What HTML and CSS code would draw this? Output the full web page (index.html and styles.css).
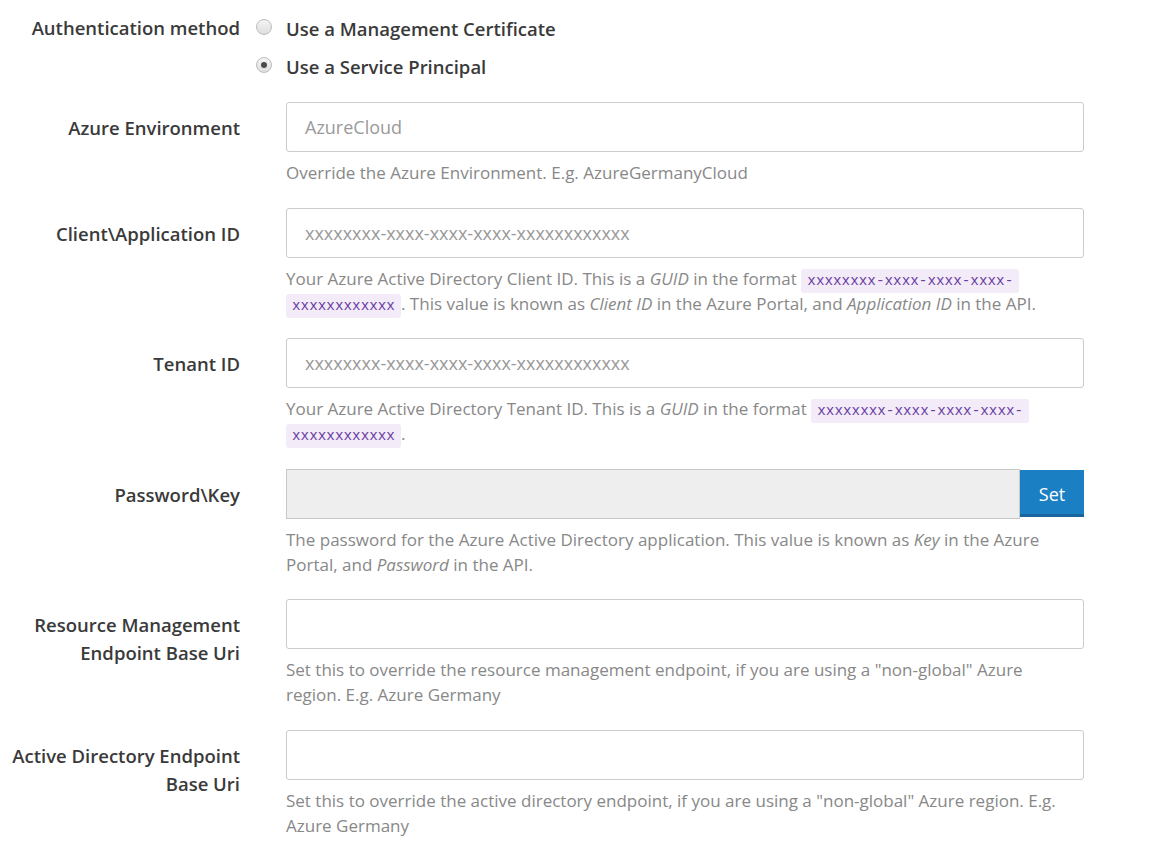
FILE: index.html
```html
<!DOCTYPE html>
<html lang="en">
<head>
<meta charset="utf-8">
<title>Azure account</title>
<link rel="stylesheet" href="styles.css">
</head>
<body>
<form class="form">
  <div class="row row-auth">
    <div class="label">Authentication method</div>
    <div class="control radios">
      <label class="radio"><span class="dot"></span><span class="radio-text">Use a Management Certificate</span></label>
      <label class="radio"><span class="dot checked"></span><span class="radio-text">Use a Service Principal</span></label>
    </div>
  </div>

  <div class="row">
    <div class="label">Azure Environment</div>
    <div class="control">
      <div class="input"><span class="placeholder">AzureCloud</span></div>
      <p class="help">Override the Azure Environment. E.g. AzureGermanyCloud</p>
    </div>
  </div>

  <div class="row">
    <div class="label">Client\Application ID</div>
    <div class="control">
      <div class="input"><span class="placeholder">xxxxxxxx-xxxx-xxxx-xxxx-xxxxxxxxxxxx</span></div>
      <p class="help">Your Azure Active Directory Client ID. This is a <em>GUID</em> in the format <code>xxxxxxxx-xxxx-xxxx-xxxx-<br>xxxxxxxxxxxx</code>. This value is known as <em>Client ID</em> in the Azure Portal, and <em>Application ID</em> in the API.</p>
    </div>
  </div>

  <div class="row">
    <div class="label">Tenant ID</div>
    <div class="control">
      <div class="input"><span class="placeholder">xxxxxxxx-xxxx-xxxx-xxxx-xxxxxxxxxxxx</span></div>
      <p class="help">Your Azure Active Directory Tenant ID. This is a <em>GUID</em> in the format <code>xxxxxxxx-xxxx-xxxx-xxxx-<br>xxxxxxxxxxxx</code>.</p>
    </div>
  </div>

  <div class="row">
    <div class="label">Password\Key</div>
    <div class="control">
      <div class="input-group">
        <div class="input input-disabled"></div>
        <button type="button" class="btn-set">Set</button>
      </div>
      <p class="help">The password for the Azure Active Directory application. This value is known as <em>Key</em> in the Azure<br>Portal, and <em>Password</em> in the API.</p>
    </div>
  </div>

  <div class="row">
    <div class="label">Resource Management<br>Endpoint Base Uri</div>
    <div class="control">
      <div class="input"></div>
      <p class="help">Set this to override the resource management endpoint, if you are using a "non-global" Azure<br>region. E.g. Azure Germany</p>
    </div>
  </div>

  <div class="row">
    <div class="label">Active Directory Endpoint<br>Base Uri</div>
    <div class="control">
      <div class="input"></div>
      <p class="help">Set this to override the active directory endpoint, if you are using a "non-global" Azure region. E.g.<br>Azure Germany</p>
    </div>
  </div>
</form>
</body>
</html>
```

FILE: styles.css
```css
html, body {
  margin: 0;
  padding: 0;
  background: #ffffff;
}

body {
  font-family: "Segoe UI", "Open Sans", "Noto Sans", sans-serif;
  color: #333333;
}

.form {
  padding-top: 14px;
  width: 1084px;
}

.row {
  display: grid;
  grid-template-columns: 240px 1fr;
  column-gap: 16px;
  margin-bottom: 22.5px;
}

.row-auth {
  margin-bottom: 22px;
}

.label {
  text-align: right;
  font-size: 18.5px;
  font-weight: 600;
  line-height: 28px;
  padding-top: 12px;
  color: #3a3a3a;
  white-space: nowrap;
}

.row-auth .label {
  padding-top: 0;
}

.control {
  min-width: 0;
}

.radios {
  display: flex;
  flex-direction: column;
  gap: 10px;
}

.radio {
  display: flex;
  align-items: center;
  height: 28px;
  font-size: 18.5px;
  font-weight: 600;
  color: #3a3a3a;
  white-space: nowrap;
}

.dot {
  box-sizing: border-box;
  width: 16px;
  height: 16px;
  border-radius: 50%;
  border: 1px solid #bdbdbd;
  background: linear-gradient(#f4f4f4, #dedede);
  margin-right: 14px;
  position: relative;
  flex: none;
  margin-top: -2px;
}

.dot.checked::after {
  content: "";
  position: absolute;
  left: 4px;
  top: 4px;
  width: 6px;
  height: 6px;
  border-radius: 50%;
  background: #4a4a4a;
}

.input {
  box-sizing: border-box;
  margin-left: 30px;
  height: 50px;
  border: 1px solid #cccccc;
  border-radius: 3px;
  background: #ffffff;
  display: flex;
  align-items: center;
  padding-left: 18px;
  font-size: 18px;
}

.placeholder {
  color: #9a9a9a;
}

.input-group {
  display: flex;
  align-items: flex-start;
  margin-left: 30px;
}

.input-group .input {
  margin-left: 0;
  flex: 1;
  border-radius: 0;
  border-color: #c8c8c8;
}

.input-disabled {
  background: #eeeeee;
}

.btn-set {
  box-sizing: border-box;
  width: 64px;
  height: 47px;
  margin-top: 1px;
  border: none;
  border-bottom: 3px solid #1865a0;
  background: #1b7fc4;
  color: #ffffff;
  font-family: inherit;
  font-size: 18px;
  padding: 5px 0 0 0;
}

.help {
  margin: 8px 0 0 30px;
  font-size: 17px;
  line-height: 25px;
  color: #888888;
  white-space: nowrap;
}

.help em {
  font-style: italic;
}

.help code {
  font-family: "Liberation Mono", "DejaVu Sans Mono", monospace;
  font-size: 14.3px;
  line-height: 0;
  color: #6a3fa3;
  background: #f3ebf8;
  padding: 4px 6px;
  border-radius: 3px;
  -webkit-box-decoration-break: clone;
  box-decoration-break: clone;
}
```
